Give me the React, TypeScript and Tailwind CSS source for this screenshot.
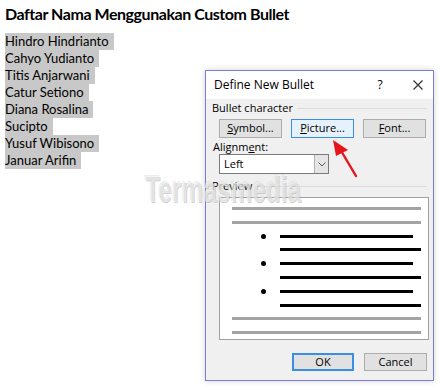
const names = [
  'Hindro Hindrianto',
  'Cahyo Yudianto',
  'Titis Anjarwani',
  'Catur Setiono',
  'Diana Rosalina',
  'Sucipto',
  'Yusuf Wibisono',
  'Januar Arifin',
];

function Bullet() {
  return (
    <div className="flex items-center h-[3px]">
      <div className="w-[5px] h-[5px] rounded-full bg-black ml-[29px]" />
      <div className="h-[3px] bg-black ml-[14px] w-[133px]" />
    </div>
  );
}

function PreviewBox() {
  const grey = <div className="h-[3px] bg-[#a3a3a3] w-[189px]" />;
  return (
    <div className="mt-[4px] ml-[13px] w-[210px] h-[143px] bg-white border border-[#a0a0a0] flex flex-col pt-[9px] pl-[12px] gap-[10.8px]">
      {grey}
      {grey}
      <Bullet />
      <div className="h-[3px] bg-black ml-[48px] w-[141px]" />
      <Bullet />
      <div className="h-[3px] bg-black ml-[48px] w-[141px]" />
      <Bullet />
      <div className="h-[3px] bg-black ml-[48px] w-[141px]" />
      {grey}
      {grey}
    </div>
  );
}

function Btn({ u, rest, active }: { u: string; rest: string; active?: boolean }) {
  return (
    <div
      className={
        active
          ? 'w-[63px] h-[19px] flex items-center justify-center border border-[#3a8ee6] bg-[#e5f1fb] text-[11px]'
          : 'w-[63px] h-[19px] flex items-center justify-center border border-[#adadad] bg-[#e1e1e1] text-[11px]'
      }
    >
      <span>
        <span className="underline">{u}</span>
        {rest}
      </span>
    </div>
  );
}

export default function App() {
  return (
    <div className="w-[440px] h-[388px] bg-white relative overflow-hidden text-black" style={{ fontFamily: 'Lato, "Noto Sans", sans-serif' }}>
      <div className="pt-[3px] pl-[5px]">
        <h1 className="text-[16px] font-bold leading-[22px] tracking-[-0.45px]">Daftar Nama Menggunakan Custom Bullet</h1>
        <div className="mt-[8px] flex flex-col items-start">
          {names.map((n) => (
            <span key={n} className="bg-[#c8c8c8] text-[13px] leading-[17px] pr-[5px]">
              {n}
            </span>
          ))}
        </div>
      </div>

      {/* dialog */}
      <div
        className="absolute left-[205px] top-[70px] w-[229px] h-[311px] border border-[#7b7bdb] bg-[#f0f0f0] shadow-[0_0_6px_rgba(0,0,0,0.18)] flex flex-col text-[12px]"
        style={{ fontFamily: '"Open Sans", "Noto Sans", sans-serif' }}
      >
        <div className="h-[28px] bg-white flex items-center pl-[8px] pr-[10px]">
          <span className="flex-1 text-[12px]">Define New Bullet</span>
          <span className="w-[14px] text-center mr-[26px]">?</span>
          <svg width="10" height="10" viewBox="0 0 10 10">
            <path d="M0.5 0.5 L9.5 9.5 M9.5 0.5 L0.5 9.5" stroke="#333" strokeWidth="1.2" />
          </svg>
        </div>
        <div className="flex items-center pl-[6px] pr-[6px] mt-[1px]">
          <span className="text-[11px] leading-[16px]">Bullet character</span>
          <div className="flex-1 h-px bg-[#dcdcdc] ml-[4px]" />
        </div>
        <div className="flex gap-[9px] pl-[13px] mt-[3px]">
          <Btn u="S" rest="ymbol..." />
          <Btn u="P" rest="icture..." active />
          <Btn u="F" rest="ont..." />
        </div>
        <div className="pl-[7px] mt-[2px] text-[11px] leading-[14px]">
          Alignm<span className="underline">e</span>nt:
        </div>
        <div className="ml-[13px] w-[110px] h-[20px] bg-white border border-[#7a7a7a] flex items-center text-[11px]">
          <span className="flex-1 pl-[4px]">Left</span>
          <div className="w-[14px] h-full bg-[#e5e5e5] border-l border-[#b0b0b0] flex items-center justify-center">
            <svg width="8" height="5" viewBox="0 0 8 5">
              <path d="M0.5 0.5 L4 4 L7.5 0.5" stroke="#555" fill="none" strokeWidth="1" />
            </svg>
          </div>
        </div>
        <div className="flex items-center pl-[6px] pr-[6px] mt-[5px]">
          <span className="text-[11px] leading-[14px]">Preview</span>
          <div className="flex-1 h-px bg-[#dcdcdc] ml-[4px]" />
        </div>
        <PreviewBox />
        <div className="flex justify-end gap-[10px] pr-[6px] mt-[13px]">
          <div className="w-[62px] h-[18px] border-2 border-[#3a8ee6] bg-[#e1e1e1] flex items-center justify-center text-[11px]">OK</div>
          <div className="w-[63px] h-[18px] border border-[#adadad] bg-[#e1e1e1] flex items-center justify-center text-[11px]">Cancel</div>
        </div>
      </div>

      {/* watermark */}
      <div
        aria-hidden
        className="absolute left-[145px] top-[176px] text-[36px] font-bold leading-[28px] scale-x-[0.68] origin-left text-white/50 pointer-events-none select-none"
        style={{ fontFamily: '"Liberation Sans", sans-serif', textShadow: '1px 1px 0 rgba(150,150,150,0.45), -1px -1px 0 rgba(200,200,200,0.35)' }}
      >
        Termasmedia
      </div>

      {/* red arrow */}
      <svg className="absolute left-[325px] top-[135px]" width="40" height="45" viewBox="0 0 40 45">
        <path d="M31 41 L15 14" stroke="#e8141b" strokeWidth="2.4" strokeLinecap="round" />
        <path d="M8 5 L23 15 L11 21 Z" fill="#e8141b" />
      </svg>
    </div>
  );
}
